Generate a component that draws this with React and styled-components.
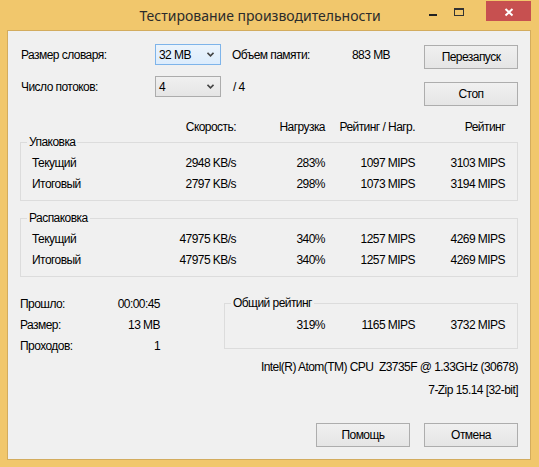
import React from 'react';
import styled, { createGlobalStyle } from 'styled-components';

const Global = createGlobalStyle`
  html, body { margin: 0; padding: 0; background: #F1C76C; }
  body { font-family: "Liberation Sans", Arial, sans-serif; }
  * { box-sizing: border-box; }
`;

const Window = styled.div`
  width: 539px;
  height: 467px;
  background: #F1C76C;
  display: flex;
  flex-direction: column;
  overflow: hidden;
`;

const TitleBar = styled.div`
  height: 30px;
  flex-shrink: 0;
  display: flex;
  align-items: flex-start;
`;

const Title = styled.div`
  flex: 1;
  padding: 1px 0 0 100px;
  text-align: center;
  font-family: "Noto Sans", "Open Sans", sans-serif;
  font-size: 14px;
  line-height: 30px;
  color: #2b2b2b;
  white-space: nowrap;
`;

const Controls = styled.div`
  display: flex;
  align-items: flex-start;
  margin-right: 8px;
`;

const CtrlButton = styled.div`
  width: 26px;
  height: 30px;
`;

const CloseButton = styled.div`
  width: 45px;
  height: 20px;
  margin: 1px 0 0 14px;
  background: #C75050;
`;

const Client = styled.div`
  flex: 1;
  margin: 0 8px 7px 7px;
  border: 1px solid #D3AC5E;
  background: #F0F0F0;
  padding: 13px 12px 12px 12px;
  display: flex;
  flex-direction: column;
  font-size: 12px;
  letter-spacing: -0.55px;
  color: #000;
`;

const TopSection = styled.div`
  display: flex;
  justify-content: space-between;
  align-items: flex-start;
`;

const SettingsGrid = styled.div`
  display: grid;
  grid-template-columns: 134px 66px 131px auto;
  grid-auto-rows: 21px;
  row-gap: 11px;
  align-items: center;
  margin-left: 1px;
`;

const InfoLabel = styled.div`
  padding-left: ${p => p.$pad || 0}px;
  white-space: nowrap;
`;

const Combo = styled.div`
  height: 21px;
  border: 1px solid ${p => (p.$focus ? '#7EB4EA' : '#ACACAC')};
  background: ${p =>
    p.$focus
      ? 'linear-gradient(#ECF4FC, #DCECFC)'
      : 'linear-gradient(#F0F0F0, #E5E5E5)'};
  display: flex;
  align-items: center;
  justify-content: space-between;
  padding: 0 6px 0 3px;
`;

const ButtonColumn = styled.div`
  display: flex;
  flex-direction: column;
  gap: 13px;
  margin-top: 1px;
`;

const Button = styled.div`
  width: 94px;
  height: 24px;
  border: 1px solid #ADADAD;
  background: linear-gradient(#F0F0F0, #E5E5E5);
  display: flex;
  align-items: center;
  justify-content: center;
  white-space: nowrap;
`;

const TableGrid = styled.div`
  display: grid;
  grid-template-columns: 108px 96px 89px 90px 90px;
  grid-auto-rows: ${p => p.$row || 21}px;
  align-items: center;
  margin: ${p => p.$margin || '0'};
`;

const Cell = styled.div`
  text-align: ${p => (p.$left ? 'left' : 'right')};
  white-space: nowrap;
`;

const GroupBox = styled.div`
  border: 1px solid #DCDCDC;
  padding: 0 12px ${p => p.$pb}px 11px;
  margin-top: ${p => p.$mt}px;
  width: ${p => p.$w || 'auto'};
  margin-left: ${p => p.$ml || '0'};
`;

const Legend = styled.div`
  width: fit-content;
  height: 14px;
  line-height: 14px;
  margin: -8px 0 0 -5px;
  padding: 0 2px;
  background: #F0F0F0;
  white-space: nowrap;
`;

const BottomSection = styled.div`
  display: flex;
  align-items: flex-start;
  margin-top: 16px;
`;

const StatsGrid = styled.div`
  display: grid;
  grid-template-columns: 90px 50px;
  grid-auto-rows: 21px;
  align-items: center;
`;

const OverallGrid = styled.div`
  display: grid;
  grid-template-columns: 89px 90px 90px;
  grid-auto-rows: 21px;
  align-items: center;
  margin-top: 4px;
`;

const InfoLine = styled.div`
  text-align: right;
  line-height: 16px;
  margin-top: ${p => p.$mt}px;
  white-space: nowrap;
`;

const FooterButtons = styled.div`
  display: flex;
  justify-content: flex-end;
  gap: 14px;
  margin-top: 25px;
`;

const Chevron = () => (
  <svg width="7" height="5" viewBox="0 0 7 5">
    <polyline points="0.5,0.8 3.5,3.8 6.5,0.8" fill="none" stroke="#444" strokeWidth="1.6" />
  </svg>
);

const rows = [
  {
    title: 'Упаковка',
    mt: 7,
    data: [
      ['Текущий', '2948 KB/s', '283%', '1097 MIPS', '3103 MIPS'],
      ['Итоговый', '2797 KB/s', '298%', '1073 MIPS', '3194 MIPS'],
    ],
  },
  {
    title: 'Распаковка',
    mt: 17,
    data: [
      ['Текущий', '47975 KB/s', '340%', '1257 MIPS', '4269 MIPS'],
      ['Итоговый', '47975 KB/s', '340%', '1257 MIPS', '4269 MIPS'],
    ],
  },
];

export default function App() {
  return (
    <>
      <Global />
      <Window>
        <TitleBar>
          <Title>Тестирование производительности</Title>
          <Controls>
            <CtrlButton>
              <svg width="26" height="30">
                <rect x="9" y="14" width="8" height="2" fill="#222" />
              </svg>
            </CtrlButton>
            <CtrlButton>
              <svg width="26" height="30">
                <rect x="8.5" y="9.5" width="9" height="6" fill="none" stroke="#333" strokeWidth="1" />
                <rect x="8" y="8" width="10" height="2" fill="#333" />
              </svg>
            </CtrlButton>
            <CloseButton>
              <svg width="45" height="20">
                <path d="M19.5 8 L26.5 14.5 M26.5 8 L19.5 14.5" stroke="#fff" strokeWidth="2" />
              </svg>
            </CloseButton>
          </Controls>
        </TitleBar>
        <Client>
          <TopSection>
            <SettingsGrid>
              <InfoLabel>Размер словаря:</InfoLabel>
              <Combo $focus>
                <span>32 MB</span>
                <Chevron />
              </Combo>
              <InfoLabel $pad={11}>Объем памяти:</InfoLabel>
              <InfoLabel>883 MB</InfoLabel>
              <InfoLabel>Число потоков:</InfoLabel>
              <Combo>
                <span>4</span>
                <Chevron />
              </Combo>
              <InfoLabel $pad={12}>/ 4</InfoLabel>
              <InfoLabel />
            </SettingsGrid>
            <ButtonColumn>
              <Button>Перезапуск</Button>
              <Button>Стоп</Button>
            </ButtonColumn>
          </TopSection>

          <TableGrid $row={16} $margin="13px 0 0 12px">
            <Cell $left />
            <Cell>Скорость:</Cell>
            <Cell>Нагрузка</Cell>
            <Cell>Рейтинг / Нагр.</Cell>
            <Cell>Рейтинг</Cell>
          </TableGrid>

          {rows.map(g => (
            <GroupBox key={g.title} $mt={g.mt} $pb={6}>
              <Legend>{g.title}</Legend>
              <TableGrid $margin="3px 0 0 0">
                {g.data.map(r =>
                  r.map((v, i) => (
                    <Cell key={r[0] + i} $left={i === 0}>
                      {v}
                    </Cell>
                  ))
                )}
              </TableGrid>
            </GroupBox>
          ))}

          <BottomSection>
            <StatsGrid>
              <Cell $left>Прошло:</Cell>
              <Cell>00:00:45</Cell>
              <Cell $left>Размер:</Cell>
              <Cell>13 MB</Cell>
              <Cell $left>Проходов:</Cell>
              <Cell>1</Cell>
            </StatsGrid>
            <GroupBox $mt={10} $pb={13} $w="294px" $ml="auto">
              <Legend>Общий рейтинг</Legend>
              <OverallGrid>
                <Cell>319%</Cell>
                <Cell>1165 MIPS</Cell>
                <Cell>3732 MIPS</Cell>
              </OverallGrid>
            </GroupBox>
          </BottomSection>

          <InfoLine $mt={3}>Intel(R) Atom(TM) CPU&nbsp; Z3735F @ 1.33GHz (30678)</InfoLine>
          <InfoLine $mt={7}>7-Zip 15.14 [32-bit]</InfoLine>

          <FooterButtons>
            <Button>Помощь</Button>
            <Button>Отмена</Button>
          </FooterButtons>
        </Client>
      </Window>
    </>
  );
}
